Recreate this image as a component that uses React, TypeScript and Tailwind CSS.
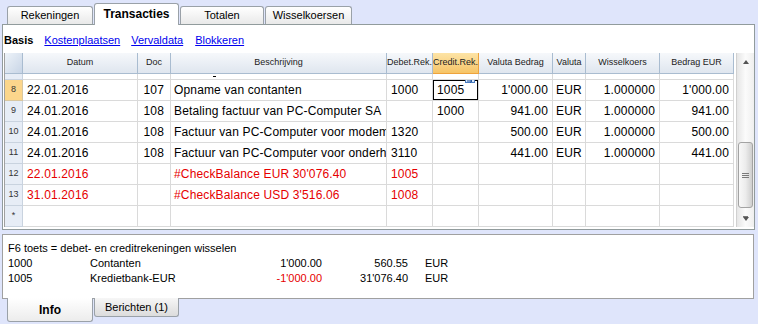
import React from "react";

type Row = {
  n: string;
  d?: string;
  doc?: string;
  desc?: string;
  deb?: string;
  cred?: string;
  vb?: string;
  val?: string;
  wk?: string;
  eur?: string;
  red?: boolean;
  sel?: boolean;
};

const rows: Row[] = [
  { n: "8", d: "22.01.2016", doc: "107", desc: "Opname van contanten", deb: "1000", cred: "1005", vb: "1'000.00", val: "EUR", wk: "1.000000", eur: "1'000.00", sel: true },
  { n: "9", d: "24.01.2016", doc: "108", desc: "Betaling factuur van PC-Computer SA", deb: "", cred: "1000", vb: "941.00", val: "EUR", wk: "1.000000", eur: "941.00" },
  { n: "10", d: "24.01.2016", doc: "108", desc: "Factuur van PC-Computer voor modem", deb: "1320", cred: "", vb: "500.00", val: "EUR", wk: "1.000000", eur: "500.00" },
  { n: "11", d: "24.01.2016", doc: "108", desc: "Factuur van PC-Computer voor onderhoud", deb: "3110", cred: "", vb: "441.00", val: "EUR", wk: "1.000000", eur: "441.00" },
  { n: "12", d: "22.01.2016", doc: "", desc: "#CheckBalance EUR 30'076.40", deb: "1005", red: true },
  { n: "13", d: "31.01.2016", doc: "", desc: "#CheckBalance USD 3'516.06", deb: "1008", red: true },
  { n: "*" },
];

const GRID = "grid grid-cols-[18px_115px_33px_216px_46px_46px_74px_33px_74px_74px]";

function HeaderCell({ label, active }: { label: string; active?: boolean }) {
  return (
    <div
      className={
        active
          ? "h-[21px] flex items-center justify-center overflow-hidden whitespace-nowrap text-[9px] text-[#222] bg-gradient-to-b from-[#fde4a6] to-[#f6c466] border-r border-b border-[#eea33c]"
          : "h-[21px] flex items-center justify-center overflow-hidden whitespace-nowrap text-[9px] text-[#222] bg-gradient-to-b from-[#f6f8fb] to-[#dfe6ef] border-r border-b border-[#a9bcd0]"
      }
    >
      {label}
    </div>
  );
}

function SelIcon() {
  return (
    <svg width="10" height="9" viewBox="0 0 10 9" className="absolute right-[3px] top-[-5px]">
      <rect x="0.5" y="0.5" width="9" height="7" fill="#d6e6f7" stroke="#4a7cc0" />
      <rect x="1" y="1" width="8" height="2" fill="#6f9fd8" />
      <path d="M2 6 H7 M5 4.5 L7 6 L5 7.5" stroke="#1d4f9a" strokeWidth="1" fill="none" />
    </svg>
  );
}

function DataRow({ r }: { r: Row }) {
  const c = r.red ? "text-[#e60000]" : "text-black";
  const cell = "h-[21px] flex items-center overflow-hidden whitespace-nowrap border-r border-b border-[#dadada] text-[12px] tracking-[0.15px]";
  return (
    <div className={GRID}>
      <div
        className={
          r.sel
            ? "h-[21px] flex items-center justify-center text-[9px] text-[#333] bg-[#fcd68c] border-r border-b border-[#d8c7a0]"
            : "h-[21px] flex items-center justify-center text-[9px] text-[#333] bg-[#e7edf6] border-r border-b border-[#c9d3df]"
        }
      >
        {r.n}
      </div>
      <div className={`${cell} pl-[4px] ${c}`}>{r.d}</div>
      <div className={`${cell} justify-end pr-[6px] ${c}`}>{r.doc}</div>
      <div className={`${cell} pl-[3px] ${c}`}>{r.desc}</div>
      <div className={`${cell} pl-[4px] ${c}`}>{r.deb}</div>
      <div className={`${cell} relative pl-[4px] ${c}`}>
        {r.sel ? (
          <>
            <div className="absolute left-0 top-0 w-[45px] h-[20px] border border-black pointer-events-none" />
            <SelIcon />
          </>
        ) : null}
        <span>{r.cred}</span>
      </div>
      <div className={`${cell} justify-end pr-[4px] ${c}`}>{r.vb}</div>
      <div className={`${cell} pl-[3px] ${c}`}>{r.val}</div>
      <div className={`${cell} justify-end pr-[4px] ${c}`}>{r.wk}</div>
      <div className={`${cell} justify-end pr-[4px] ${c}`}>{r.eur}</div>
    </div>
  );
}

function Scrollbar() {
  return (
    <div className="w-[20px] h-[174px] flex pl-[2px] bg-white">
      <div className="w-[18px] h-full flex flex-col items-center border-l border-[#d0d0d0] bg-gradient-to-r from-[#e6e6e6] via-[#fbfbfb] to-[#efefef]">
        <div className="h-[17px] w-full flex items-center justify-center">
          <div className="w-0 h-0 border-x-[3px] border-x-transparent border-b-[4px] border-b-[#555]" />
        </div>
        <div className="h-[72px]" />
        <div className="w-[15px] h-[66px] rounded-[3px] border border-[#a3a3a3] bg-gradient-to-r from-[#f8f8f8] via-[#ececec] to-[#cfcfcf] flex flex-col items-center justify-center gap-[1px]">
          <div className="w-[7px] h-[1px] bg-[#7a7a7a]" />
          <div className="w-[7px] h-[1px] bg-[#7a7a7a]" />
          <div className="w-[7px] h-[1px] bg-[#7a7a7a]" />
        </div>
        <div className="h-[2px]" />
        <div className="h-[17px] w-full flex flex-col items-center justify-center">
          <div className="w-[5px] h-[1px] bg-[#777]" />
          <div className="w-0 h-0 border-x-[3px] border-x-transparent border-t-[4px] border-t-[#555]" />
        </div>
      </div>
    </div>
  );
}

export default function App() {
  return (
    <div className="w-[758px] h-[324px] overflow-hidden bg-[#dfe5fb] font-['Liberation_Sans',Arial,sans-serif] text-black">
      {/* top tabs */}
      <div className="h-[24px] flex items-end pl-[7px]">
        <div className="w-[86px] h-[18px] flex items-center justify-center text-[11px] border-x border-t border-[#9aa1a8] rounded-t-[3px] bg-gradient-to-b from-[#ffffff] to-[#e9e9e9]">
          Rekeningen
        </div>
        <div className="relative z-10 ml-[1px] -mb-[1px] w-[85px] h-[22px] flex items-center justify-center pb-[1px] text-[12px] font-bold border-x border-t border-[#9aa1a8] rounded-t-[3px] bg-white">
          Transacties
        </div>
        <div className="ml-[1px] w-[84px] h-[18px] flex items-center justify-center text-[11px] border-x border-t border-[#9aa1a8] rounded-t-[3px] bg-gradient-to-b from-[#ffffff] to-[#e9e9e9]">
          Totalen
        </div>
        <div className="ml-[1px] w-[87px] h-[18px] flex items-center justify-center text-[11px] border-x border-t border-[#9aa1a8] rounded-t-[3px] bg-gradient-to-b from-[#ffffff] to-[#e9e9e9]">
          Wisselkoersen
        </div>
      </div>

      {/* main panel */}
      <div className="ml-[2px] w-[753px] h-[206px] border border-[#919b9c] bg-white flex flex-col">
        <div className="h-[28px] flex items-center pt-[3px] pl-[1px] gap-[11px] text-[11px]">
          <span className="font-bold">Basis</span>
          <span className="text-[#0000ee] underline">Kostenplaatsen</span>
          <span className="text-[#0000ee] underline">Vervaldata</span>
          <span className="text-[#0000ee] underline ml-[1px]">Blokkeren</span>
        </div>
        <div className="ml-[1px] w-[750px] h-[174px] flex border-l border-[#a0a0a0]">
          <div className="w-[729px] flex flex-col">
            <div className={GRID}>
              <div className="h-[21px] border-r border-b border-[#a9bcd0] bg-gradient-to-br from-[#eef3f9] to-[#c8d5e6]" />
              <HeaderCell label="Datum" />
              <HeaderCell label="Doc" />
              <HeaderCell label="Beschrijving" />
              <HeaderCell label="Debet.Rek." />
              <HeaderCell label="Credit.Rek." active />
              <HeaderCell label="Valuta Bedrag" />
              <HeaderCell label="Valuta" />
              <HeaderCell label="Wisselkoers" />
              <HeaderCell label="Bedrag EUR" />
            </div>
            {/* partially scrolled row */}
            <div className={GRID}>
              <div className="h-[6px] bg-[#e7edf6] border-r border-b border-[#c9d3df]" />
              <div className="h-[6px] border-r border-b border-[#dadada]" />
              <div className="h-[6px] border-r border-b border-[#dadada]" />
              <div className="h-[6px] border-r border-b border-[#dadada] pl-[42px] pt-[2px]">
                <div className="w-[3px] h-[1px] bg-black" />
              </div>
              <div className="h-[6px] border-r border-b border-[#dadada]" />
              <div className="h-[6px] border-r border-b border-[#dadada]" />
              <div className="h-[6px] border-r border-b border-[#dadada]" />
              <div className="h-[6px] border-r border-b border-[#dadada]" />
              <div className="h-[6px] border-r border-b border-[#dadada]" />
              <div className="h-[6px] border-r border-b border-[#dadada]" />
            </div>
            {rows.map((r) => (
              <DataRow key={r.n} r={r} />
            ))}
          </div>
          <Scrollbar />
        </div>
      </div>

      {/* info panel */}
      <div className="mt-[4px] ml-[2px] w-[752px] h-[65px] border border-[#a0a0a0] bg-white pt-[6px] pl-[5px] text-[11px] leading-[15px]">
        <div>F6 toets = debet- en creditrekeningen wisselen</div>
        <div className="flex">
          <span className="w-[82px]">1000</span>
          <span className="w-[150px]">Contanten</span>
          <span className="w-[82px] text-right">1'000.00</span>
          <span className="w-[86px] text-right">560.55</span>
          <span className="ml-[17px]">EUR</span>
        </div>
        <div className="flex">
          <span className="w-[82px]">1005</span>
          <span className="w-[150px]">Kredietbank-EUR</span>
          <span className="w-[82px] text-right text-[#e60000]">-1'000.00</span>
          <span className="w-[86px] text-right">31'076.40</span>
          <span className="ml-[17px]">EUR</span>
        </div>
      </div>

      {/* bottom tabs */}
      <div className="-mt-[1px] flex items-start pl-[7px]">
        <div className="relative z-10 w-[86px] h-[24px] flex items-center justify-center pt-[1px] text-[12px] font-bold border-x border-b border-[#9aa1a8] rounded-b-[3px] bg-gradient-to-b from-[#ffffff] to-[#ececec]">
          Info
        </div>
        <div className="ml-[1px] w-[85px] h-[19px] flex items-center justify-center text-[11px] border-x border-b border-[#9aa1a8] rounded-b-[3px] bg-gradient-to-b from-[#f6f6f6] to-[#dcdcdc]">
          Berichten (1)
        </div>
      </div>
    </div>
  );
}
